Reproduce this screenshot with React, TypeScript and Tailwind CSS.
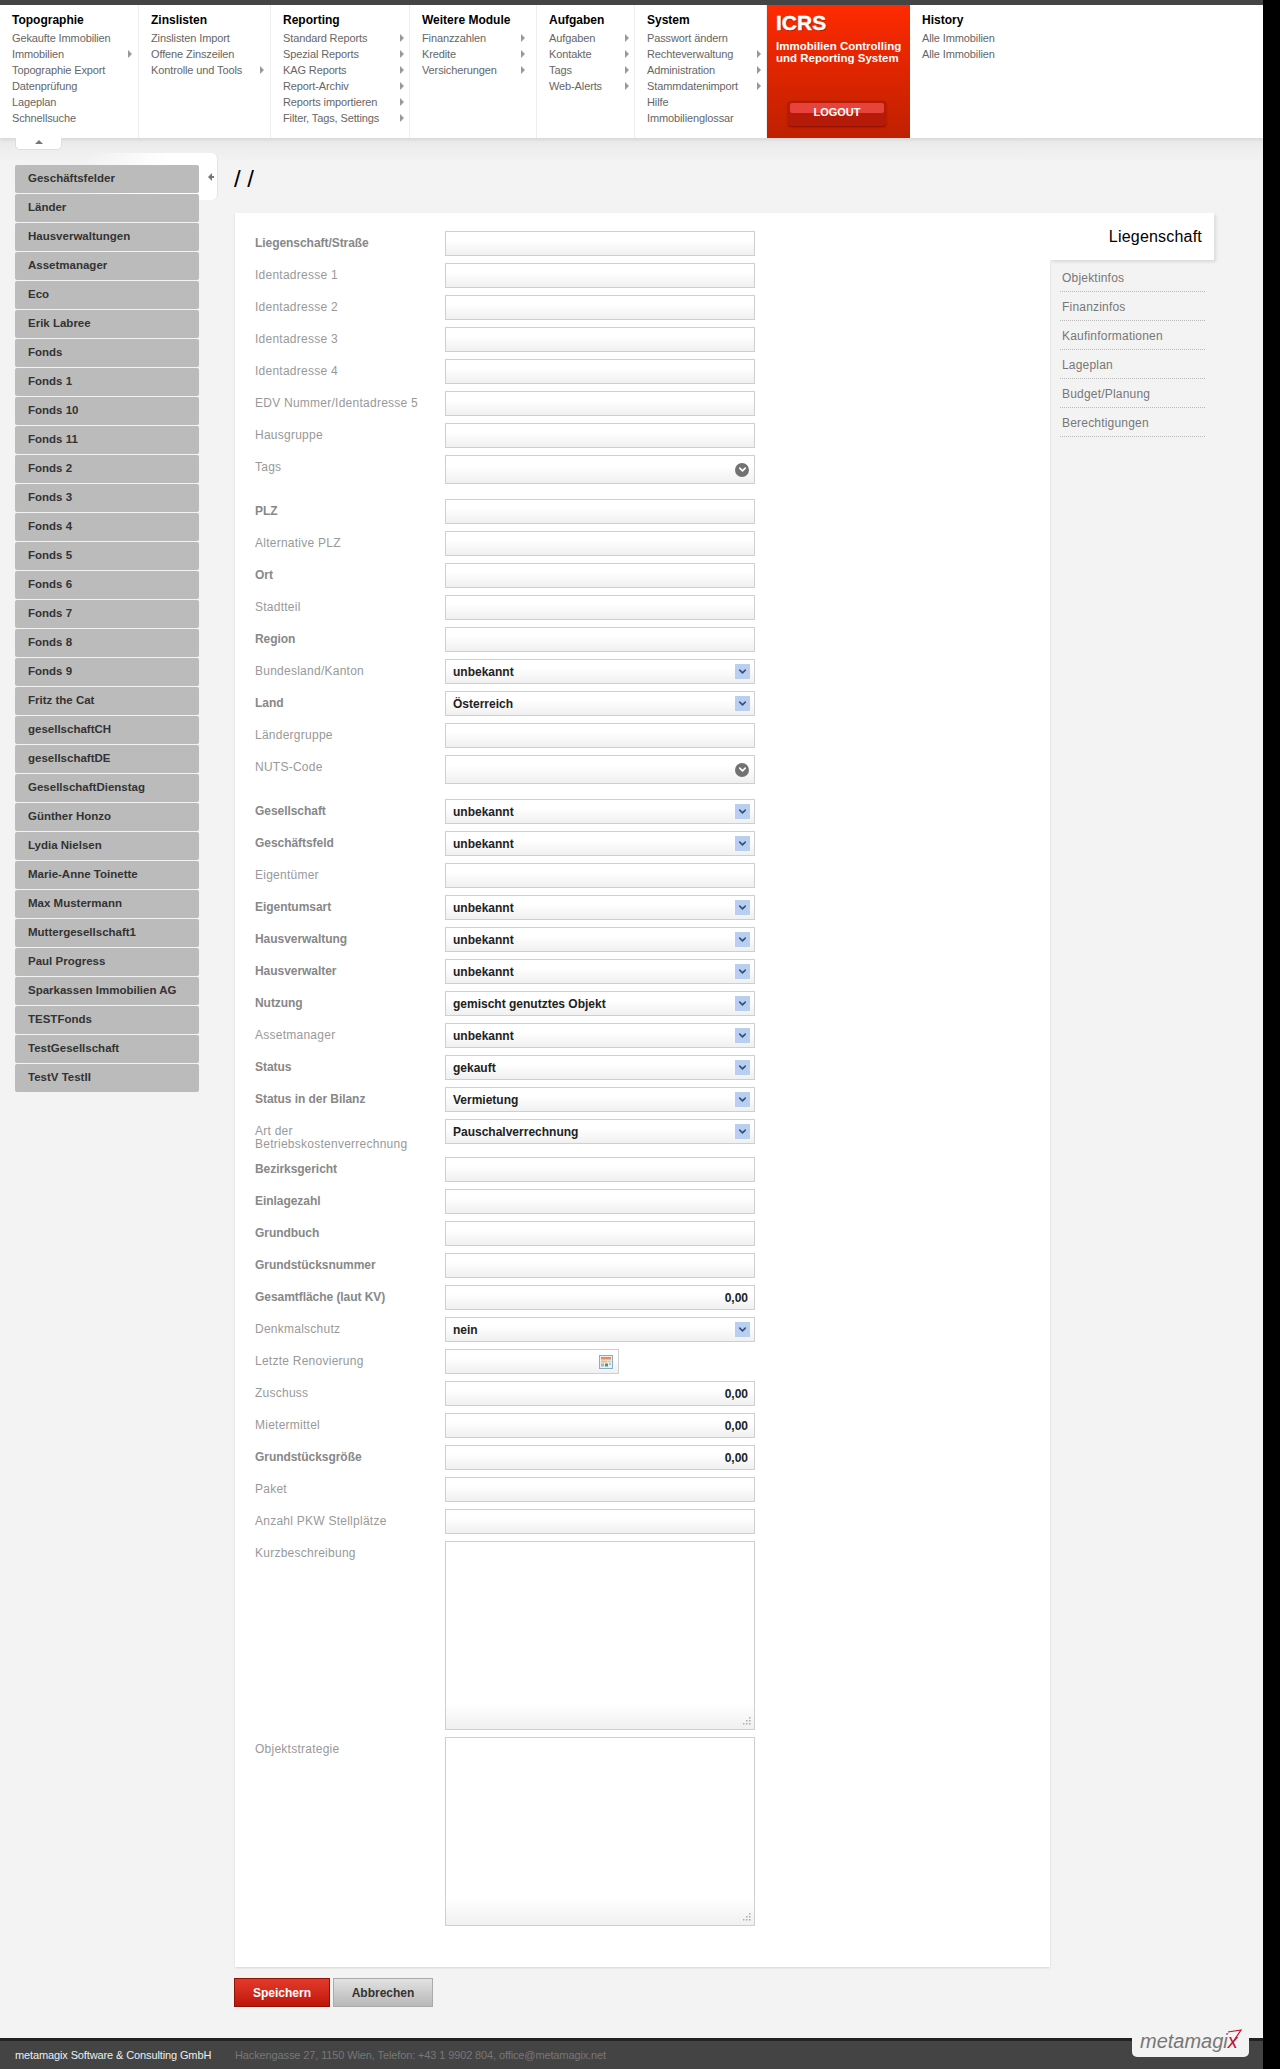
import { ChevronDown } from 'lucide-react'

const menus = [
  { title: 'Topographie', width: 'w-[139px] pr-[6px]', items: [['Gekaufte Immobilien', false], ['Immobilien', true], ['Topographie Export', false], ['Datenprüfung', false], ['Lageplan', false], ['Schnellsuche', false]] },
  { title: 'Zinslisten', width: 'w-[132px] pr-[6px]', items: [['Zinslisten Import', false], ['Offene Zinszeilen', false], ['Kontrolle und Tools', true]] },
  { title: 'Reporting', width: 'w-[139px] pr-[5px]', items: [['Standard Reports', true], ['Spezial Reports', true], ['KAG Reports', true], ['Report-Archiv', true], ['Reports importieren', true], ['Filter, Tags, Settings', true]] },
  { title: 'Weitere Module', width: 'w-[127px] pr-[11px]', items: [['Finanzzahlen', true], ['Kredite', true], ['Versicherungen', true]] },
  { title: 'Aufgaben', width: 'w-[98px] pr-[5px]', items: [['Aufgaben', true], ['Kontakte', true], ['Tags', true], ['Web-Alerts', true]] },
  { title: 'System', width: 'w-[132px] pr-[5px]', items: [['Passwort ändern', false], ['Rechteverwaltung', true], ['Administration', true], ['Stammdatenimport', true], ['Hilfe', false], ['Immobilienglossar', false]] },
] as { title: string; width: string; items: [string, boolean][] }[]

const sidebarItems = [
  'Geschäftsfelder', 'Länder', 'Hausverwaltungen', 'Assetmanager', 'Eco', 'Erik Labree', 'Fonds', 'Fonds 1',
  'Fonds 10', 'Fonds 11', 'Fonds 2', 'Fonds 3', 'Fonds 4', 'Fonds 5', 'Fonds 6', 'Fonds 7', 'Fonds 8', 'Fonds 9',
  'Fritz the Cat', 'gesellschaftCH', 'gesellschaftDE', 'GesellschaftDienstag', 'Günther Honzo', 'Lydia Nielsen',
  'Marie-Anne Toinette', 'Max Mustermann', 'Muttergesellschaft1', 'Paul Progress', 'Sparkassen Immobilien AG',
  'TESTFonds', 'TestGesellschaft', 'TestV TestII',
]

const sideNav = ['Objektinfos', 'Finanzinfos', 'Kaufinformationen', 'Lageplan', 'Budget/Planung', 'Berechtigungen']

type Field = {
  label: string
  bold?: boolean
  kind?: 'text' | 'select' | 'tags' | 'number' | 'date' | 'area'
  value?: string
}

const fields: Field[] = [
  { label: 'Liegenschaft/Straße', bold: true },
  { label: 'Identadresse 1' },
  { label: 'Identadresse 2' },
  { label: 'Identadresse 3' },
  { label: 'Identadresse 4' },
  { label: 'EDV Nummer/Identadresse 5' },
  { label: 'Hausgruppe' },
  { label: 'Tags', kind: 'tags' },
  { label: 'PLZ', bold: true },
  { label: 'Alternative PLZ' },
  { label: 'Ort', bold: true },
  { label: 'Stadtteil' },
  { label: 'Region', bold: true },
  { label: 'Bundesland/Kanton', kind: 'select', value: 'unbekannt' },
  { label: 'Land', bold: true, kind: 'select', value: 'Österreich' },
  { label: 'Ländergruppe' },
  { label: 'NUTS-Code', kind: 'tags' },
  { label: 'Gesellschaft', bold: true, kind: 'select', value: 'unbekannt' },
  { label: 'Geschäftsfeld', bold: true, kind: 'select', value: 'unbekannt' },
  { label: 'Eigentümer' },
  { label: 'Eigentumsart', bold: true, kind: 'select', value: 'unbekannt' },
  { label: 'Hausverwaltung', bold: true, kind: 'select', value: 'unbekannt' },
  { label: 'Hausverwalter', bold: true, kind: 'select', value: 'unbekannt' },
  { label: 'Nutzung', bold: true, kind: 'select', value: 'gemischt genutztes Objekt' },
  { label: 'Assetmanager', kind: 'select', value: 'unbekannt' },
  { label: 'Status', bold: true, kind: 'select', value: 'gekauft' },
  { label: 'Status in der Bilanz', bold: true, kind: 'select', value: 'Vermietung' },
  { label: 'Art der Betriebskostenverrechnung', kind: 'select', value: 'Pauschalverrechnung' },
  { label: 'Bezirksgericht', bold: true },
  { label: 'Einlagezahl', bold: true },
  { label: 'Grundbuch', bold: true },
  { label: 'Grundstücksnummer', bold: true },
  { label: 'Gesamtfläche (laut KV)', bold: true, kind: 'number', value: '0,00' },
  { label: 'Denkmalschutz', kind: 'select', value: 'nein' },
  { label: 'Letzte Renovierung', kind: 'date' },
  { label: 'Zuschuss', kind: 'number', value: '0,00' },
  { label: 'Mietermittel', kind: 'number', value: '0,00' },
  { label: 'Grundstücksgröße', bold: true, kind: 'number', value: '0,00' },
  { label: 'Paket' },
  { label: 'Anzahl PKW Stellplätze' },
  { label: 'Kurzbeschreibung', kind: 'area' },
  { label: 'Objektstrategie', kind: 'area' },
]

const boxClass = 'border border-[#cfcfcf] bg-gradient-to-b from-white from-35% to-[#f0f0f0]'

function SubArrow() {
  return <span className="w-0 h-0 border-y-[4px] border-y-transparent border-l-[4px] border-l-[#999]" />
}

function MenuColumn({ title, width, items }: { title: string; width: string; items: [string, boolean][] }) {
  return (
    <div className={`${width} shrink-0 border-r border-[#eeeeee] pl-[12px] pt-[7px]`}>
      <div className="text-[12px] leading-[16px] font-bold text-black mb-[2px]">{title}</div>
      {items.map(([name, sub]) => (
        <div key={name} className="flex items-center justify-between h-[16px] text-[11px] tracking-[-0.12px] text-[#666]">
          <span>{name}</span>
          {sub && <SubArrow />}
        </div>
      ))}
    </div>
  )
}

function CalendarIcon() {
  return (
    <svg width="14" height="14" viewBox="0 0 14 14">
      <rect x="0.5" y="0.5" width="13" height="13" fill="#e8f0fa" stroke="#8fa9cc" />
      <rect x="2" y="2" width="10" height="2.5" fill="#f08a4b" />
      <rect x="2" y="5.5" width="6" height="2" fill="#f5b58a" />
      <rect x="8.5" y="5.5" width="3.5" height="2" fill="#c8d6c0" />
      <rect x="2" y="8.5" width="3" height="3" fill="#9cc0a0" />
      <rect x="6" y="8.5" width="3" height="3" fill="#4f9a5b" />
      <rect x="10" y="8.5" width="2" height="1.5" fill="#9cc0a0" />
    </svg>
  )
}

function FieldControl({ field }: { field: Field }) {
  const kind = field.kind ?? 'text'
  if (kind === 'area') {
    return (
      <div className="relative w-[310px] h-[189px] border border-[#cfcfcf] bg-gradient-to-b from-white from-[86%] to-[#f0f0f0]">
        <svg className="absolute right-[3px] bottom-[4px]" width="9" height="9" viewBox="0 0 9 9" fill="#aaa">
          <rect x="7" y="1" width="1.5" height="1.5" />
          <rect x="4" y="4" width="1.5" height="1.5" />
          <rect x="7" y="4" width="1.5" height="1.5" />
          <rect x="1" y="7" width="1.5" height="1.5" />
          <rect x="4" y="7" width="1.5" height="1.5" />
          <rect x="7" y="7" width="1.5" height="1.5" />
        </svg>
      </div>
    )
  }
  if (kind === 'tags') {
    return (
      <div className={`${boxClass} w-[310px] h-[29px] flex items-center justify-end pr-[5px]`}>
        <span className="w-[14px] h-[14px] rounded-full bg-[#727272] flex items-center justify-center">
          <ChevronDown size={11} strokeWidth={3.5} color="#fff" />
        </span>
      </div>
    )
  }
  if (kind === 'select') {
    return (
      <div className={`${boxClass} w-[310px] h-[25px] flex items-center justify-between pl-[7px] pr-[4px] text-[12px] font-bold text-[#222]`}>
        <span>{field.value}</span>
        <span className="w-[15px] h-[15px] bg-[#b9cff2] flex items-center justify-center">
          <ChevronDown size={11} strokeWidth={3.5} color="#3a4f7a" />
        </span>
      </div>
    )
  }
  if (kind === 'date') {
    return (
      <div className={`${boxClass} w-[174px] h-[25px] flex items-center justify-end pr-[5px]`}>
        <CalendarIcon />
      </div>
    )
  }
  if (kind === 'number') {
    return (
      <div className={`${boxClass} w-[310px] h-[25px] flex items-center justify-end pr-[6px] text-[12px] font-bold text-[#222]`}>
        {field.value}
      </div>
    )
  }
  return <div className={`${boxClass} w-[310px] h-[25px]`} />
}

function rowMargin(field: Field) {
  if (field.kind === 'tags') return 'mb-[15px]'
  if (field.label.startsWith('Art der')) return 'mb-[6px]'
  return 'mb-[7px]'
}

function FormRow({ field }: { field: Field }) {
  const twoLine = field.label.startsWith('Art der')
  return (
    <div className={`flex ${rowMargin(field)}`}>
      <label
        className={`w-[190px] shrink-0 text-[12px] ${twoLine ? 'pt-[6px] leading-[13px] pr-[20px]' : 'pt-[4px] leading-[16px]'} ${field.bold ? 'font-bold tracking-[-0.05px] text-[#888]' : 'tracking-[0.25px] text-[#999]'}`}
      >
        {field.label}
      </label>
      <FieldControl field={field} />
    </div>
  )
}

export default function App() {
  return (
    <div className="flex w-[1280px] h-[2069px] bg-black font-['Liberation_Sans',Arial,sans-serif]">
      <div className="relative w-[1263px] h-full flex flex-col bg-[#f3f3f3]">
        <header className="h-[138px] shrink-0 border-t-[5px] border-[#444] bg-white flex shadow-[0_2px_3px_rgba(0,0,0,0.08)] relative z-10">
          {menus.map((m) => (
            <MenuColumn key={m.title} {...m} />
          ))}
          <div className="w-[143px] shrink-0 bg-gradient-to-b from-[#ff2a00] to-[#bf2000] pl-[9px] pt-[5px] text-white">
            <div className="text-[21px] leading-[26px] font-bold [-webkit-text-stroke:0.4px_white] [text-shadow:1px_1px_1px_rgba(0,0,0,0.3)]">ICRS</div>
            <div className="mt-[4px] text-[11.5px] leading-[12px] font-bold">
              Immobilien Controlling
              <br />
              und Reporting System
            </div>
            <div className="mt-[37px] ml-[12px] w-[98px] h-[25px] rounded-[3px] bg-[#b51b08] shadow-[0_1px_2px_rgba(90,0,0,0.6)] relative">
              <div className="absolute left-[2px] right-[2px] top-[2px] h-[10px] rounded-[2px] bg-[#e8433a]" />
              <div className="relative text-center text-[11px] leading-[23px] font-bold">LOGOUT</div>
            </div>
          </div>
          <div className="pl-[12px] pt-[7px]">
            <div className="text-[12px] leading-[16px] font-bold text-black mb-[2px]">History</div>
            <div className="h-[16px] text-[11px] tracking-[-0.12px] text-[#666]">Alle Immobilien</div>
            <div className="h-[16px] text-[11px] tracking-[-0.12px] text-[#666]">Alle Immobilien</div>
          </div>
        </header>

        {/* collapse handle under the menu */}
        <div className="absolute left-[15px] top-[138px] z-20 w-[47px] h-[12px] bg-white border border-t-0 border-[#ddd] rounded-b-[5px] flex justify-center pt-[2px]">
          <span className="w-0 h-0 border-x-[4px] border-x-transparent border-b-[4px] border-b-[#777]" />
        </div>

        <div className="flex-1 flex bg-gradient-to-b from-[#e9e9e9] to-[#f3f3f3] to-[24px]">
          <aside className="relative w-[235px] shrink-0 pl-[15px] pt-[27px]">
            <div className="absolute right-[17px] top-[15px] w-[130px] h-[47px] rounded-r-[6px] bg-gradient-to-r from-transparent to-white to-60% border-r border-[#e6e6e6]" />
            {/* collapse arrow */}
            <span className="absolute left-[208px] top-[35px] w-0 h-0 border-y-[4px] border-y-transparent border-r-[4px] border-r-[#777]" />
            <span className="absolute left-[212px] top-[38px] w-[2px] h-[2px] bg-[#777]" />
            <div className="relative w-[184px] flex flex-col gap-[1px]">
              {sidebarItems.map((name) => (
                <div key={name} className="h-[28px] rounded-[2px] bg-[#bbbbbb] pl-[13px] text-[11.5px] leading-[27px] font-bold text-[#333]">
                  {name}
                </div>
              ))}
            </div>
          </aside>

          <main className="flex-1 min-w-0 flex flex-col">
            <div className="h-[75px] pt-[29px] -ml-[1px] text-[24px] leading-[24px] text-black shrink-0">/ /</div>
            <div className="flex">
              <div className="w-[815px] h-[1754px] bg-white shadow-[0_1px_2px_rgba(0,0,0,0.12)] pl-[20px] pr-[24px] pt-[18px]">
                {fields.map((f) => (
                  <FormRow key={f.label} field={f} />
                ))}
              </div>
              <div className="w-[164px] shrink-0">
                <div className="h-[47px] bg-white shadow-[2px_2px_3px_rgba(0,0,0,0.1)] pr-[12px] text-right text-[16px] tracking-[0.2px] leading-[48px] text-black">
                  Liegenschaft
                </div>
                <nav className="pl-[10px] pr-[9px] pt-[3px]">
                  {sideNav.map((n) => (
                    <div key={n} className="h-[29px] border-b border-dotted border-[#bbb] pl-[2px] pt-[7px] text-[12px] tracking-[0.2px] leading-[16px] text-[#777]">
                      {n}
                    </div>
                  ))}
                </nav>
              </div>
            </div>
            <div className="flex gap-[3px] mt-[11px] -ml-[1px]">
              <button className="w-[96px] h-[29px] border border-[#8e1208] bg-gradient-to-b from-[#e5392a] to-[#bd1608] text-[12px] font-bold text-white">
                Speichern
              </button>
              <button className="w-[100px] h-[29px] border border-[#aaa] bg-gradient-to-b from-[#e2e2e2] to-[#b8b8b8] text-[12px] font-bold text-[#333]">
                Abbrechen
              </button>
            </div>
          </main>
        </div>

        <footer className="h-[31px] shrink-0 border-t-[3px] border-[#222] bg-[#444] flex items-center text-[11px] tracking-[-0.12px]">
          <span className="w-[235px] pl-[15px] text-[#eee] shrink-0">metamagix Software &amp; Consulting GmbH</span>
          <span className="text-[#777]">Hackengasse 27, 1150 Wien, Telefon: +43 1 9902 804, office@metamagix.net</span>
        </footer>

        {/* logo sits over the footer edge */}
        <div className="absolute left-[1132px] top-[2025px] w-[117px] h-[32px] rounded-[5px] bg-[#f3f3f3] z-20 flex items-center pl-[8px] pb-[1px] text-[20px] italic text-[#777]">
          <span>metamagi</span>
          <span className="text-[#c8102e]">x</span>
          <svg className="absolute right-[6px] top-[4px]" width="16" height="14" viewBox="0 0 16 14" fill="none" stroke="#c8102e" strokeWidth="1.2">
            <path d="M1 3 L14 1 L6 13" />
          </svg>
        </div>
      </div>
      <div className="w-[17px] h-full bg-black" />
    </div>
  )
}
